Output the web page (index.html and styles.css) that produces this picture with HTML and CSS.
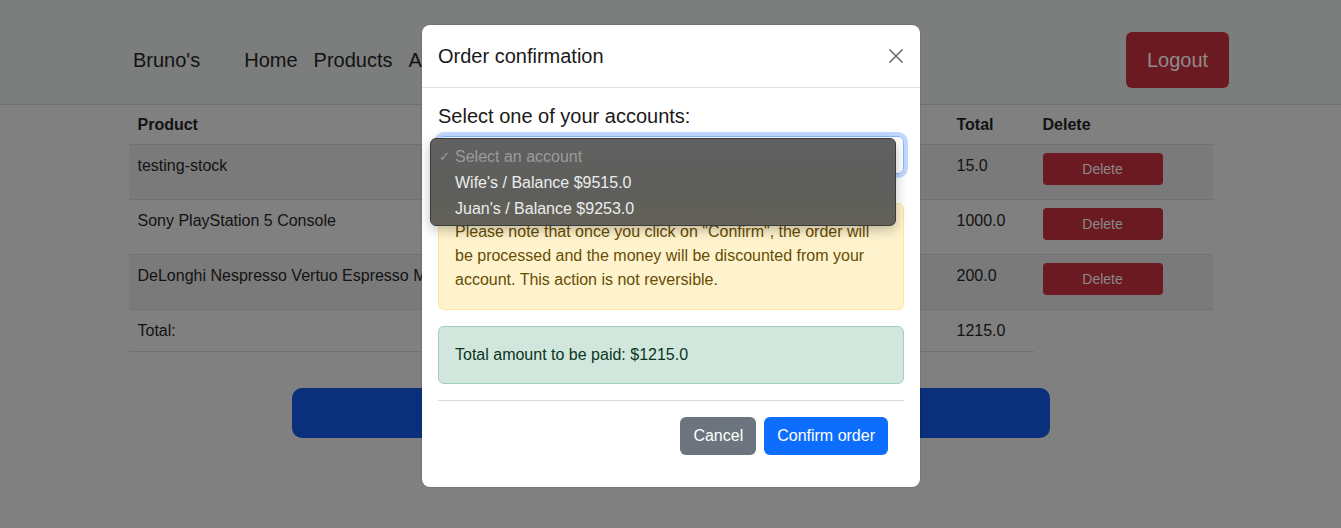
FILE: index.html
```html
<!DOCTYPE html>
<html lang="en">
<head>
<meta charset="utf-8">
<title>Bruno's - Cart</title>
<link rel="stylesheet" href="styles.css">
</head>
<body>
<header class="navbar">
  <div class="nav-left">
    <span class="brand">Bruno's</span>
    <nav class="links">
      <a>Home</a>
      <a>Products</a>
      <a>Accounts</a>
    </nav>
  </div>
  <button class="logout">Logout</button>
</header>

<main class="page">
  <table class="cart">
    <thead>
      <tr>
        <th class="c-product">Product</th>
        <th class="c-price">Price</th>
        <th class="c-qty">Quantity</th>
        <th class="c-total">Total</th>
        <th class="c-del">Delete</th>
      </tr>
    </thead>
    <tbody>
      <tr class="odd">
        <td>testing-stock</td>
        <td>15.0</td>
        <td>1</td>
        <td>15.0</td>
        <td><button class="del">Delete</button></td>
      </tr>
      <tr>
        <td>Sony PlayStation 5 Console</td>
        <td>500.0</td>
        <td>2</td>
        <td>1000.0</td>
        <td><button class="del">Delete</button></td>
      </tr>
      <tr class="odd">
        <td>DeLonghi Nespresso Vertuo Espresso Machine</td>
        <td>200.0</td>
        <td>1</td>
        <td>200.0</td>
        <td><button class="del">Delete</button></td>
      </tr>
      <tr class="total-row">
        <td>Total:</td>
        <td></td>
        <td></td>
        <td>1215.0</td>
      </tr>
    </tbody>
  </table>
  <button class="checkout">Checkout</button>
</main>

<div class="modal">
  <div class="modal-header">
    <h5 class="modal-title">Order confirmation</h5>
    <button class="close" aria-label="Close">
      <svg width="16" height="16" viewBox="0 0 16 16"><path d="M1.5 1.5 L14.5 14.5 M14.5 1.5 L1.5 14.5" stroke="#6b6b6b" stroke-width="1.6" fill="none"/></svg>
    </button>
  </div>
  <div class="modal-body">
    <h5 class="label">Select one of your accounts:</h5>
    <div class="select-wrap">
      <div class="select">Select an account</div>
      <div class="menu">
        <div class="opt opt-dis"><span class="check">✓</span>Select an account</div>
        <div class="opt">Wife's / Balance $9515.0</div>
        <div class="opt">Juan's / Balance $9253.0</div>
      </div>
    </div>
    <div class="alert alert-warning">Please note that once you click on "Confirm", the order will be processed and the money will be discounted from your account. This action is not reversible.</div>
    <div class="alert alert-success">Total amount to be paid: $1215.0</div>
    <hr class="sep">
    <div class="actions">
      <button class="btn btn-secondary">Cancel</button>
      <button class="btn btn-primary">Confirm order</button>
    </div>
  </div>
</div>
</body>
</html>
```

FILE: styles.css
```css
* { box-sizing: border-box; }

html, body {
  margin: 0;
  padding: 0;
  background: #808080;
  font-family: "Liberation Sans", Arial, Helvetica, sans-serif;
  color: #121212;
  font-size: 16px;
  line-height: 1.5;
  overflow: hidden;
  height: 528px;
}

.navbar {
  height: 105px;
  background: #7c7d7d;
  border-bottom: 1px solid #6e7071;
  display: flex;
  align-items: center;
  justify-content: space-between;
  padding: 16px 112px 0 133px;
}

.nav-left {
  display: flex;
  align-items: center;
}

.brand {
  font-size: 20px;
  color: #121212;
  margin-right: 44px;
}

.links {
  display: flex;
  gap: 16px;
}

.links a {
  font-size: 20px;
  color: #121212;
}

.logout {
  width: 103px;
  height: 56px;
  background: #6c1a21;
  border: none;
  border-radius: 6px;
  color: #8c8c8c;
  font-family: inherit;
  font-size: 20px;
  padding: 0;
}

.page {
  display: flex;
  flex-direction: column;
  align-items: center;
}

.cart {
  width: 1084px;
  border-collapse: collapse;
}

.cart th, .cart td {
  text-align: left;
  vertical-align: top;
  padding: 8px 9px;
  border-bottom: 1px solid #6f7173;
}

.cart th {
  font-weight: bold;
  padding-top: 8px;
  padding-bottom: 7px;
}

.cart tbody tr { height: 55px; }
.cart tr.odd td { background: #7a7a7a; }
.cart tr.total-row { height: 41px; }
.cart tbody td { padding-top: 9px; }

.c-product { width: 400px; }
.c-price { width: 220px; }
.c-qty { width: 199px; }
.c-total { width: 86px; }
.c-del { width: 179px; }

.del {
  width: 120px;
  height: 32px;
  margin-top: -1px;
  background: #6c1a21;
  border: none;
  border-radius: 4px;
  color: #8a8a8a;
  font-family: inherit;
  font-size: 14px;
  padding: 0;
  display: block;
}

.checkout {
  margin-top: 36px;
  width: 758px;
  height: 50px;
  background: #0a2f7b;
  border: none;
  border-radius: 10px;
  color: #0a2f7b;
  font-size: 20px;
}

/* Modal (over the dimmed page) */
.modal {
  position: absolute;
  top: 25px;
  left: 422px;
  width: 498px;
  background: #fff;
  border-radius: 8px;
  color: #212529;
  box-shadow: 0 0 0 1px rgba(0,0,0,0.08);
}

.modal-header {
  display: flex;
  align-items: center;
  justify-content: space-between;
  padding: 16px;
  border-bottom: 1px solid #dee2e6;
  height: 63px;
}

.modal-title {
  margin: 0;
  font-size: 20px;
  font-weight: normal;
  line-height: 30px;
  color: #1a1a1a;
}

.close {
  background: none;
  border: none;
  padding: 0;
  width: 16px;
  height: 16px;
  display: flex;
}

.modal-body {
  padding: 16px 16px 32px;
}

.label {
  margin: 0 0 8px;
  font-size: 20px;
  font-weight: normal;
  line-height: 24px;
  color: #1a1a1a;
}

.select-wrap {
  position: relative;
  margin-bottom: 29px;
}

.select {
  height: 38px;
  border: 1px solid #86b7fe;
  border-radius: 6px;
  box-shadow: 0 0 0 4px #c2d8fd;
  padding: 6px 12px;
  color: #212529;
}

.menu {
  position: absolute;
  left: -8px;
  top: 2px;
  width: 466px;
  height: 88px;
  border-radius: 6px;
  border: 1px solid #3c3c3c;
  background: linear-gradient(#606160, #5e5f5c 60%, #636258);
  box-shadow: 0 4px 12px rgba(0,0,0,0.25);
  padding-top: 5px;
}

.opt {
  height: 26px;
  line-height: 26px;
  padding-left: 24px;
  font-size: 16px;
  color: #ececec;
  position: relative;
}

.opt-dis { color: #9b9b9b; }

.check {
  position: absolute;
  left: 8px;
  font-size: 13px;
  color: #9b9b9b;
}

.alert {
  border-radius: 6px;
  padding: 16px;
  margin-bottom: 16px;
  line-height: 24px;
}

.alert-warning {
  background: #fff3cd;
  border: 1px solid #ffe69c;
  color: #664d03;
  min-height: 107px;
}

.alert-success {
  background: #d1e7dd;
  border: 1px solid #a3cfbb;
  color: #0a3622;
}

.sep {
  margin: 16px 0;
  border: none;
  border-top: 1px solid #d6dbe0;
}

.actions {
  display: flex;
  justify-content: flex-end;
  gap: 8px;
  padding-right: 16px;
}

.btn {
  height: 38px;
  padding: 0 13px;
  border: none;
  border-radius: 6px;
  font-family: inherit;
  font-size: 16px;
  color: #fff;
}

.btn-secondary { background: #6c757d; }
.btn-primary { background: #0d6efd; }
```
